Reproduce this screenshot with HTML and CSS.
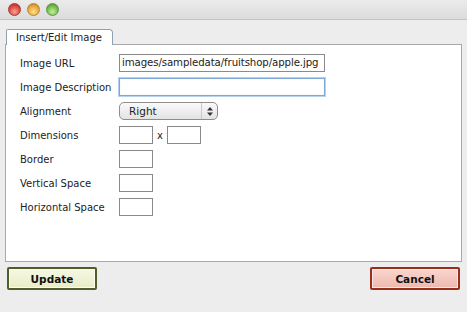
FILE: index.html
```html
<!DOCTYPE html>
<html>
<head>
<meta charset="utf-8">
<link rel="stylesheet" href="styles.css">
</head>
<body>
<div class="window">
  <div class="titlebar">
    <span class="light red"></span>
    <span class="light amber"></span>
    <span class="light green"></span>
  </div>
  <div class="content">
    <div class="tabs"><div class="tab">Insert/Edit Image</div></div>
    <div class="panel">
      <div class="row"><label>Image URL</label><div class="field url">images/sampledata/fruitshop/apple.jpg</div></div>
      <div class="row"><label>Image Description</label><div class="field desc"></div></div>
      <div class="row"><label>Alignment</label>
        <div class="select"><span class="sel-text">Right</span><span class="sel-arrows"><svg width="6" height="9" viewBox="0 0 6 9"><path d="M3 0 L6 3.5 L0 3.5 Z M0 5.5 L6 5.5 L3 9 Z" fill="#333"/></svg></span></div>
      </div>
      <div class="row"><label>Dimensions</label><div class="field small"></div><span class="times">x</span><div class="field small"></div></div>
      <div class="row"><label>Border</label><div class="field small"></div></div>
      <div class="row"><label>Vertical Space</label><div class="field small"></div></div>
      <div class="row"><label>Horizontal Space</label><div class="field small"></div></div>
    </div>
    <div class="actions">
      <button class="btn update">Update</button>
      <button class="btn cancel">Cancel</button>
    </div>
  </div>
</div>
</body>
</html>
```
FILE: styles.css
```css
html, body {
  margin: 0;
  padding: 0;
  background: #ededed;
}
.window {
  width: 467px;
  height: 312px;
  font-family: "DejaVu Sans", Verdana, sans-serif;
  font-size: 10px;
  color: #222;
  background: #ededed;
}
.titlebar {
  height: 20px;
  box-sizing: border-box;
  background: linear-gradient(#ebebeb, #dcdcdc);
  border-bottom: 1px solid #c4c4c4;
  display: flex;
  align-items: center;
  gap: 6px;
  padding-left: 8px;
}
.light {
  width: 13px;
  height: 13px;
  border-radius: 50%;
  box-sizing: border-box;
}
.red { background: radial-gradient(circle at 50% 70%, #f8a29a, #d8453c 60%, #a92a22); border: 1px solid #a8382f; }
.amber { background: radial-gradient(circle at 50% 70%, #fde28f, #e4a53a 60%, #b57a1c); border: 1px solid #b4862b; }
.green { background: radial-gradient(circle at 50% 70%, #c7eea0, #70b84a 60%, #468a2a); border: 1px solid #5e9a3a; }
.content {
  padding: 8px 5px 0 5px;
}
.tabs {
  display: flex;
  height: 16px;
  padding-left: 1px;
}
.tab {
  position: relative;
  top: 1px;
  width: 107px;
  height: 16px;
  box-sizing: border-box;
  background: #fff;
  border: 1px solid #8fa0b5;
  border-bottom: none;
  border-radius: 2px 4px 0 0;
  padding: 2px 0 0 9px;
  font-size: 10px;
  color: #222;
}
.panel {
  width: 457px;
  height: 218px;
  box-sizing: border-box;
  background: #fff;
  border: 1px solid #a9a9a9;
  padding: 9px 0 0 14px;
}
.row {
  display: flex;
  align-items: center;
  height: 18px;
  margin-bottom: 6px;
}
.row label {
  width: 99px;
}
.field {
  height: 18px;
  box-sizing: border-box;
  border: 1px solid #8a8a8a;
  background: #fff;
  font-size: 10.5px;
  line-height: 16px;
  padding-left: 2px;
  white-space: nowrap;
  overflow: hidden;
}
.url { width: 206px; font-size: 10.2px; letter-spacing: -0.1px; }
.desc {
  width: 206px;
  border: 1px solid #7fa7d6;
  box-shadow: 0 0 0 1px #b7d2f0, inset 0 0 1px #b7d2f0;
}
.small { width: 34px; }
.times { margin: 0 4px 0 4px; }
.select {
  width: 99px;
  height: 18px;
  box-sizing: border-box;
  border: 1px solid #8e8e8e;
  border-radius: 5px;
  background: linear-gradient(#fafafa, #e3e3e3);
  display: flex;
  align-items: center;
}
.sel-text {
  flex: 1;
  padding-left: 9px;
  font-size: 10.5px;
}
.sel-arrows {
  width: 15px;
  height: 16px;
  border-left: 1px solid #c8c8c8;
  display: flex;
  align-items: center;
  justify-content: center;
}
.actions {
  display: flex;
  justify-content: space-between;
  padding: 5px 2px 0 2px;
}
.btn {
  width: 90px;
  height: 23px;
  font-family: "DejaVu Sans", Verdana, sans-serif;
  font-size: 10.5px;
  font-weight: bold;
  color: #111;
  border-radius: 2px;
  padding: 0;
}
.update {
  border: 2px solid #4f5d2a;
  background: linear-gradient(#f6f8e4, #e8edc6);
  box-shadow: inset 0 0 0 1px #fbfcee;
}
.cancel {
  border: 2px solid #9a2e1c;
  background: linear-gradient(#f9d6cf, #eeb8ae);
  box-shadow: inset 0 0 0 1px #fde8e4;
}
```
